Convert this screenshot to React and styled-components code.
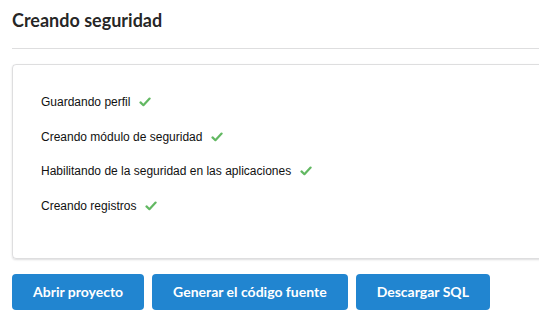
import React from 'react';
import styled, { createGlobalStyle } from 'styled-components';

const GlobalStyle = createGlobalStyle`
  html, body {
    margin: 0;
    padding: 0;
    background: #ffffff;
    overflow: hidden;
  }
  body {
    font-family: Lato, "Liberation Sans", Arial, sans-serif;
  }
`;

const Page = styled.div`
  width: 580px;
  padding: 9px 0 0 12px;
  box-sizing: border-box;
`;

const Header = styled.h3`
  margin: 0;
  padding-bottom: 16px;
  border-bottom: 1px solid rgba(34, 36, 38, 0.15);
  font-family: Lato, sans-serif;
  font-weight: 700;
  font-size: 18px;
  line-height: 23px;
  color: rgba(0, 0, 0, 0.87);
`;

const Segment = styled.div`
  margin-top: 15px;
  height: 195px;
  box-sizing: border-box;
  border: 1px solid rgba(34, 36, 38, 0.15);
  border-radius: 4px;
  box-shadow: 0 1px 2px 0 rgba(34, 36, 38, 0.15);
  padding: 30px 28px;
  display: flex;
  flex-direction: column;
  gap: 20.5px;
`;

const Step = styled.div`
  display: flex;
  align-items: center;
  gap: 9px;
  font-family: "Liberation Sans", Arial, sans-serif;
  font-size: 12px;
  line-height: 14px;
  color: #111;
`;

const Check = () => (
  <svg width="12" height="10" viewBox="0 0 12 10">
    <path d="M1.5 5.4 L4.4 8.2 L10.6 1.6" fill="none" stroke="#62b862" strokeWidth="2.2" strokeLinecap="round" strokeLinejoin="round" />
  </svg>
);

const Actions = styled.div`
  display: flex;
  gap: 8px;
  margin-top: 15px;
`;

const Button = styled.button`
  font-family: Lato, sans-serif;
  font-weight: 700;
  font-size: 14px;
  line-height: 14px;
  padding: 11px 21px;
  color: #fff;
  background: #2185d0;
  border: none;
  border-radius: 4px;
  cursor: pointer;
`;

const steps = [
  'Guardando perfil',
  'Creando módulo de seguridad',
  'Habilitando de la seguridad en las aplicaciones',
  'Creando registros',
];

export default function App() {
  return (
    <>
      <GlobalStyle />
      <Page>
        <Header>Creando seguridad</Header>
        <Segment>
          {steps.map((s) => (
            <Step key={s}>
              {s}
              <Check />
            </Step>
          ))}
        </Segment>
        <Actions>
          <Button>Abrir proyecto</Button>
          <Button>Generar el código fuente</Button>
          <Button>Descargar SQL</Button>
        </Actions>
      </Page>
    </>
  );
}
